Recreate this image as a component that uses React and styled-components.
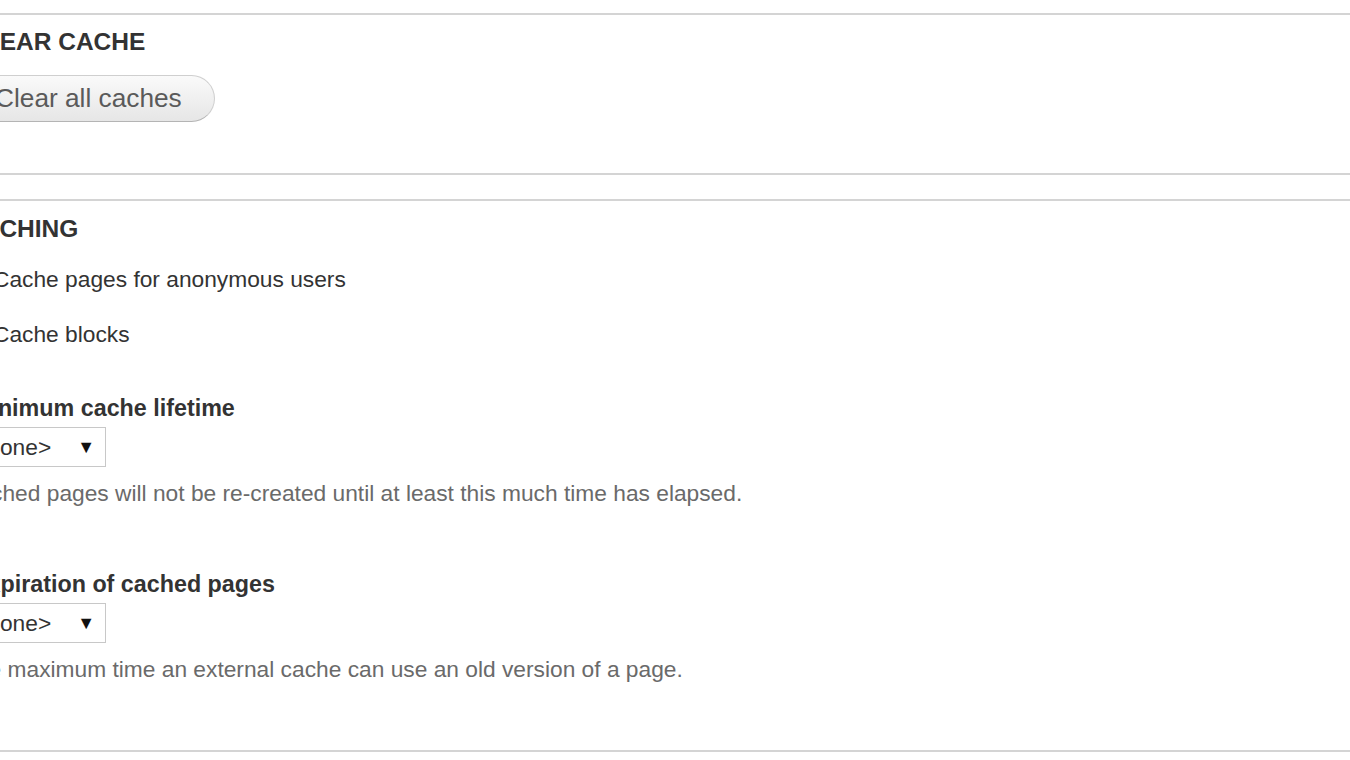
import React from 'react'
import styled, { createGlobalStyle } from 'styled-components'

const Global = createGlobalStyle`
    html, body {
        margin: 0;
        padding: 0;
        background: #fff;
        overflow: hidden;
    }
    body {
        font-family: "Liberation Sans", Arial, sans-serif;
        color: #333;
    }
`

// the screenshot is a zoomed crop, so the form starts a bit left of the window
const Page = styled.div`
    margin-left: -38px;
    width: calc(100% + 80px);
    padding-top: 13px;
`
const Fieldset = styled.section`
    border-top: 2px solid #d4d4d4;
    border-bottom: 2px solid #d4d4d4;
    padding: ${props => props.top}px 0 ${props => props.bottom}px 0;
    margin-bottom: 24px;
    display: flex;
    flex-direction: column;
    align-items: flex-start;
`
const Legend = styled.h2`
    margin: 0 0 0 ${props => props.indent}px;
    font-size: 24.5px;
    line-height: 28px;
    font-weight: bold;
    text-transform: uppercase;
    color: #333;
`
const Button = styled.button`
    margin: 19px 0 0 0;
    height: 47px;
    padding: 0 32px;
    border: 1.5px solid #cfcfcf;
    border-bottom-color: #b4b4b4;
    border-radius: 24px;
    background: linear-gradient(#fafafa, #e6e6e6);
    font-family: "Liberation Sans", Arial, sans-serif;
    font-size: 26.25px;
    color: #5a5a5a;
    cursor: pointer;
`
const CheckRow = styled.label`
    display: flex;
    align-items: center;
    height: 28px;
    margin-top: ${props => props.top}px;
    font-size: 22.75px;
    line-height: 28px;
    color: #333;
`
const Box = styled.input`
    width: 18px;
    height: 18px;
    margin: 0 13px 0 0;
`
const Item = styled.div`
    display: flex;
    flex-direction: column;
    align-items: flex-start;
    margin-top: ${props => props.top}px;
`
const Label = styled.div`
    margin-left: 10px;
    font-size: 23.3px;
    line-height: 28px;
    font-weight: bold;
    color: #333;
`
const Select = styled.div`
    display: flex;
    align-items: center;
    justify-content: space-between;
    box-sizing: border-box;
    width: 136px;
    height: 40px;
    margin: 5px 0 0 8px;
    padding: 0 10px 0 3px;
    border: 1.5px solid #c8c8c8;
    font-size: 22.75px;
    color: #333;
`
const Arrow = styled.span`
    font-size: 18px;
    line-height: 18px;
    color: #111;
`
const Desc = styled.div`
    margin-top: 13px;
    font-size: 22.75px;
    line-height: 26px;
    color: #6a6a6a;
`

const Field = ({ top, label, desc }) => (
    <Item top={top}>
        <Label>{label}</Label>
        <Select>
            <span>&lt;none&gt;</span>
            <Arrow>▼</Arrow>
        </Select>
        <Desc>{desc}</Desc>
    </Item>
)

const App = () => {
    return (
        <Page>
            <Global />
            <Fieldset top={13} bottom={51}>
                <Legend indent={5}>Clear cache</Legend>
                <Button>Clear all caches</Button>
            </Fieldset>
            <Fieldset top={14} bottom={68}>
                <Legend indent={2}>Caching</Legend>
                <CheckRow top={22}>
                    <Box type="checkbox" />
                    Cache pages for anonymous users
                </CheckRow>
                <CheckRow top={27}>
                    <Box type="checkbox" />
                    Cache blocks
                </CheckRow>
                <Field
                    top={46}
                    label="Minimum cache lifetime"
                    desc="Cached pages will not be re-created until at least this much time has elapsed."
                />
                <Field
                    top={64}
                    label="Expiration of cached pages"
                    desc="The maximum time an external cache can use an old version of a page."
                />
            </Fieldset>
        </Page>
    )
}

export default App
